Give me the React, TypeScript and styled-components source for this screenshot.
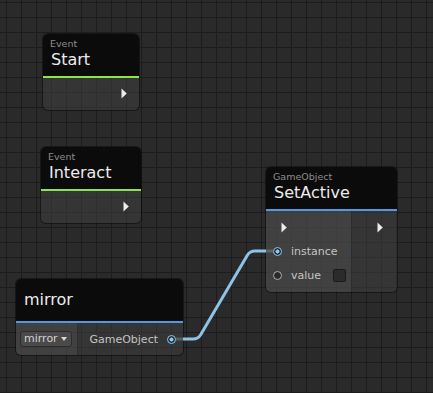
import React from "react";
import styled, { createGlobalStyle } from "styled-components";

const GlobalStyle = createGlobalStyle`
  html, body {
    margin: 0;
    padding: 0;
    background: #2a2a2a;
  }
  * {
    box-sizing: border-box;
  }
`;

const Canvas = styled.div`
  position: relative;
  width: 433px;
  height: 393px;
  overflow: hidden;
  font-family: "DejaVu Sans", Verdana, sans-serif;
  background-color: #2a2a2a;
  background-image: linear-gradient(to right, #1c1c1c 1px, transparent 1px),
    linear-gradient(to bottom, #1c1c1c 1px, transparent 1px);
  background-size: 15px 15px;
  background-position: 6px 2px;
`;

const Wires = styled.svg`
  position: absolute;
  left: 0;
  top: 0;
  pointer-events: none;
`;

const Node = styled.div<{ $x: number; $y: number; $w: number; $h: number }>`
  position: absolute;
  left: ${(p) => p.$x}px;
  top: ${(p) => p.$y}px;
  width: ${(p) => p.$w}px;
  height: ${(p) => p.$h}px;
  display: flex;
  flex-direction: column;
  border-radius: 5px;
  overflow: hidden;
  background: rgba(64, 64, 64, 0.5);
  box-shadow: 0 0 0 1px rgba(0, 0, 0, 0.45);
`;

const Header = styled.div<{ $accent: string; $center?: boolean }>`
  height: 44px;
  flex: none;
  background: #0b0b0b;
  border-bottom: 2px solid ${(p) => p.$accent};
  padding: ${(p) => (p.$center ? "0 7px" : "4px 7px 0")};
  display: flex;
  flex-direction: column;
  justify-content: ${(p) => (p.$center ? "center" : "flex-start")};
`;

const Kind = styled.div`
  font-size: 9.5px;
  line-height: 12px;
  color: #8c8c8c;
`;

const Title = styled.div`
  font-size: 16px;
  line-height: 20px;
  color: #ececec;
  padding-left: 1px;
`;

const FlowBody = styled.div`
  flex: 1;
  display: flex;
  align-items: center;
  justify-content: flex-end;
  padding: 0 12px 1px 0;
`;

const SplitBody = styled.div<{ $left: number }>`
  flex: 1;
  display: grid;
  grid-template-columns: ${(p) => p.$left}px 1fr;
`;

const Column = styled.div<{ $lit?: boolean; $pad?: string; $mid?: boolean }>`
  display: flex;
  flex-direction: column;
  justify-content: ${(p) => (p.$mid ? "center" : "flex-start")};
  padding: ${(p) => p.$pad || "4px 0 0 7px"};
  background: ${(p) => (p.$lit ? "rgba(90, 90, 90, 0.35)" : "transparent")};
  border-right: ${(p) => (p.$lit ? "1px solid rgba(0, 0, 0, 0.25)" : "none")};
`;

const Row = styled.div<{ $end?: boolean; $indent?: number }>`
  height: 24px;
  display: flex;
  align-items: center;
  gap: 9px;
  justify-content: ${(p) => (p.$end ? "flex-end" : "flex-start")};
  padding-left: ${(p) => p.$indent || 0}px;
`;

const PortLabel = styled.span`
  font-size: 11px;
  color: #c4c4c4;
`;

const Port = styled.span<{ $on?: boolean }>`
  width: 9px;
  height: 9px;
  flex: none;
  border-radius: 50%;
  border: 1.5px solid ${(p) => (p.$on ? "#8ec6ea" : "#aeaeae")};
  background: ${(p) =>
    p.$on ? "radial-gradient(circle, #8ec6ea 0 1.8px, #1e2a32 2.3px)" : "#2a2a2a"};
`;

const Check = styled.span`
  width: 13px;
  height: 13px;
  margin-left: 3px;
  border-radius: 2px;
  background: #2b2b2b;
  border: 1px solid #1a1a1a;
`;

const Dropdown = styled.div`
  height: 16px;
  display: flex;
  align-items: center;
  gap: 3px;
  padding: 0 4px 1px 3px;
  border-radius: 3px;
  background: #4a4a4a;
  border: 1px solid #2c2c2c;
  font-size: 11px;
  color: #d2d2d2;
`;

const Caret = styled.span`
  width: 0;
  height: 0;
  border-left: 3px solid transparent;
  border-right: 3px solid transparent;
  border-top: 4px solid #d8d8d8;
`;

const Flow = () => (
  <svg width="6" height="11" viewBox="0 0 6 11">
    <polygon points="0.5,0.5 5.8,5.5 0.5,10.5" fill="#ececec" />
  </svg>
);

export default function App() {
  return (
    <>
      <GlobalStyle />
      <Canvas>
        <Node $x={43} $y={34} $w={96} $h={76}>
          <Header $accent="#8fe34a">
            <Kind>Event</Kind>
            <Title>Start</Title>
          </Header>
          <FlowBody>
            <Flow />
          </FlowBody>
        </Node>

        <Node $x={41} $y={147} $w={100} $h={76}>
          <Header $accent="#8fe34a">
            <Kind>Event</Kind>
            <Title>Interact</Title>
          </Header>
          <FlowBody>
            <Flow />
          </FlowBody>
        </Node>

        <Node $x={266} $y={167} $w={131} $h={125}>
          <Header $accent="#4d9be6">
            <Kind>GameObject</Kind>
            <Title>SetActive</Title>
          </Header>
          <SplitBody $left={86}>
            <Column $lit>
              <Row $indent={8}>
                <Flow />
              </Row>
              <Row>
                <Port $on />
                <PortLabel>instance</PortLabel>
              </Row>
              <Row>
                <Port />
                <PortLabel>value</PortLabel>
                <Check />
              </Row>
            </Column>
            <Column $pad="4px 14px 0 0">
              <Row $end>
                <Flow />
              </Row>
            </Column>
          </SplitBody>
        </Node>

        <Node $x={16} $y={279} $w={167} $h={76}>
          <Header $accent="#4d9be6" $center>
            <Title>mirror</Title>
          </Header>
          <SplitBody $left={62}>
            <Column $lit $mid $pad="0 0 0 4px">
              <Row>
                <Dropdown>
                  mirror
                  <Caret />
                </Dropdown>
              </Row>
            </Column>
            <Column $mid $pad="0 7px 0 0">
              <Row $end>
                <PortLabel>GameObject</PortLabel>
                <Port $on />
              </Row>
            </Column>
          </SplitBody>
        </Node>

        <Wires width="433" height="393" viewBox="0 0 433 393">
          <path
            d="M183 339 L193 339 Q198 339 200.5 335 L247.5 255 Q250 251 255 251 L266 251"
            fill="none"
            stroke="#8cc3e6"
            strokeWidth="3"
            strokeLinejoin="round"
          />
          <line x1="176" y1="339" x2="183" y2="339" stroke="rgba(110,130,140,0.55)" strokeWidth="3" />
          <line x1="266" y1="251" x2="273" y2="251" stroke="rgba(110,130,140,0.55)" strokeWidth="3" />
        </Wires>
      </Canvas>
    </>
  );
}
